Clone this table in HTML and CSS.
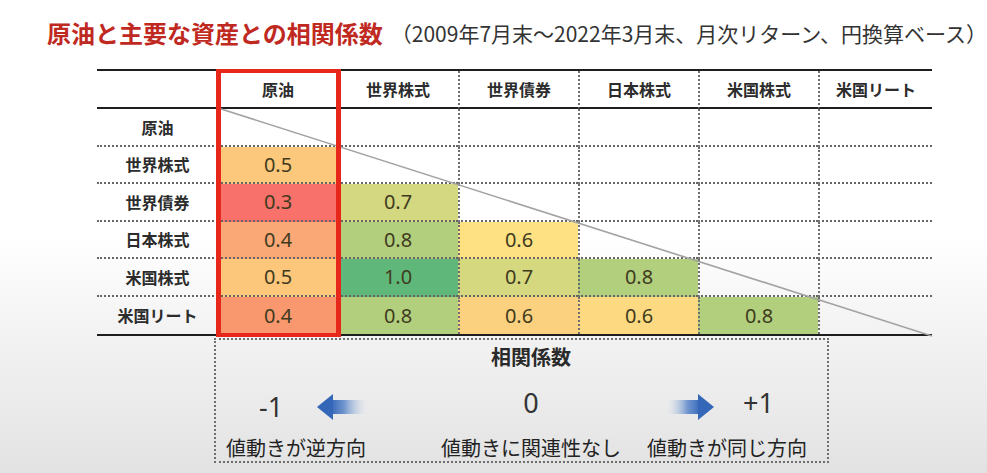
FILE: index.html
```html
<!DOCTYPE html>
<html lang="ja">
<head>
<meta charset="utf-8">
<title>原油と主要な資産との相関係数</title>
<link rel="stylesheet" href="styles.css">
</head>
<body>
<header class="title">
  <h1 class="title-main">原油と主要な資産との相関係数</h1>
  <span class="title-sub">（2009年7月末～2022年3月末、月次リターン、円換算ベース）</span>
</header>

<div class="matrix">
  <div class="cell head"></div>
  <div class="cell head">原油</div>
  <div class="cell head">世界株式</div>
  <div class="cell head vl">世界債券</div>
  <div class="cell head vl">日本株式</div>
  <div class="cell head vl">米国株式</div>
  <div class="cell head vl">米国リート</div>

  <div class="cell label">原油</div>
  <div class="cell"></div>
  <div class="cell"></div>
  <div class="cell vl"></div>
  <div class="cell vl"></div>
  <div class="cell vl"></div>
  <div class="cell vl"></div>

  <div class="cell label">世界株式</div>
  <div class="cell num c-or5">0.5</div>
  <div class="cell"></div>
  <div class="cell vl"></div>
  <div class="cell vl"></div>
  <div class="cell vl"></div>
  <div class="cell vl"></div>

  <div class="cell label">世界債券</div>
  <div class="cell num c-red3">0.3</div>
  <div class="cell num c-ol7">0.7</div>
  <div class="cell vl"></div>
  <div class="cell vl"></div>
  <div class="cell vl"></div>
  <div class="cell vl"></div>

  <div class="cell label">日本株式</div>
  <div class="cell num c-or4">0.4</div>
  <div class="cell num c-gr8">0.8</div>
  <div class="cell num vl c-ye6">0.6</div>
  <div class="cell vl"></div>
  <div class="cell vl"></div>
  <div class="cell vl"></div>

  <div class="cell label">米国株式</div>
  <div class="cell num c-or5b">0.5</div>
  <div class="cell num c-gr10">1.0</div>
  <div class="cell num vl c-ol7b">0.7</div>
  <div class="cell num vl c-gr8">0.8</div>
  <div class="cell vl"></div>
  <div class="cell vl"></div>

  <div class="cell label last">米国リート</div>
  <div class="cell num last c-or4b">0.4</div>
  <div class="cell num last c-gr8">0.8</div>
  <div class="cell num vl last c-ye6b">0.6</div>
  <div class="cell num vl last c-ye6c">0.6</div>
  <div class="cell num vl last c-gr8">0.8</div>
  <div class="cell vl last"></div>

  <svg class="diag" width="835" height="266" viewBox="0 0 835 266">
    <line x1="121" y1="37" x2="835" y2="265" stroke="#a2a2a2" stroke-width="1.6"/>
  </svg>
  <div class="highlight"></div>
</div>

<section class="legend">
  <div class="legend-title">相関係数</div>
  <div class="legend-mid left">
    <span class="num-big minus">-1</span>
    <svg class="arrow" width="50" height="26" viewBox="0 0 50 26">
      <defs>
        <linearGradient id="fadeL" x1="0" y1="0" x2="1" y2="0">
          <stop offset="0" stop-color="#3a6cbc"/>
          <stop offset="0.35" stop-color="#5b86c9" stop-opacity="0.85"/>
          <stop offset="1" stop-color="#c9d6ea" stop-opacity="0"/>
        </linearGradient>
      </defs>
      <rect x="15" y="6" width="35" height="14" fill="url(#fadeL)"/>
      <polygon points="0,13 16,0 16,26" fill="#3567b8"/>
    </svg>
  </div>
  <div class="legend-mid center">
    <span class="num-big">0</span>
  </div>
  <div class="legend-mid right">
    <svg class="arrow" width="47" height="26" viewBox="0 0 47 26">
      <defs>
        <linearGradient id="fadeR" x1="1" y1="0" x2="0" y2="0">
          <stop offset="0" stop-color="#3a6cbc"/>
          <stop offset="0.35" stop-color="#5b86c9" stop-opacity="0.85"/>
          <stop offset="1" stop-color="#c9d6ea" stop-opacity="0"/>
        </linearGradient>
      </defs>
      <rect x="0" y="6" width="32" height="14" fill="url(#fadeR)"/>
      <polygon points="47,13 31,0 31,26" fill="#3567b8"/>
    </svg>
    <span class="num-big plus">+1</span>
  </div>
  <div class="legend-text left">値動きが逆方向</div>
  <div class="legend-text center">値動きに関連性なし</div>
  <div class="legend-text right">値動きが同じ方向</div>
</section>
</body>
</html>
```

FILE: styles.css
```css
html, body {
  margin: 0;
  padding: 0;
}
body {
  width: 987px;
  height: 473px;
  overflow: hidden;
  font-family: "Noto Sans CJK JP", "Noto Sans", sans-serif;
  color: #222;
  background: linear-gradient(to bottom, #ffffff 0px, #ffffff 240px, #f4f4f4 320px, #e9e9e9 420px, #e2e2e2 473px);
}

.title {
  height: 69px;
  box-sizing: border-box;
  padding: 19px 0 0 47px;
  display: flex;
  align-items: flex-start;
  white-space: nowrap;
}
.title-main {
  margin: 0;
  font-size: 24px;
  line-height: 28px;
  height: 28px;
  font-weight: 700;
  color: #c0291f;
}
.title-sub {
  margin-left: 8px;
  font-size: 21px;
  line-height: 28px;
  color: #333;
  font-weight: 400;
}

.matrix {
  position: relative;
  margin-left: 97px;
  width: 835px;
  display: grid;
  grid-template-columns: 121px repeat(5, 120px) 114px;
  grid-template-rows: 38px repeat(6, 37.5px);
  border-top: 2px solid #1e1e1e;
  border-bottom: 2px solid #1e1e1e;
}
.cell {
  box-sizing: border-box;
  display: flex;
  align-items: center;
  justify-content: center;
  border-bottom: 2px dotted #666;
  font-size: 16px;
  font-weight: 700;
  color: #2c2c2c;
}
.cell.head {
  border-bottom: 2px solid #1e1e1e;
}
.cell.last {
  border-bottom: none;
}
.cell.vl {
  border-left: 2px dotted #6e6e6e;
}
.cell.num {
  font-family: "Noto Sans", "Noto Sans CJK JP", sans-serif;
  font-weight: 400;
  font-size: 20px;
  color: #403b1e;
}

.c-or5 { background: #fcc87b; }
.c-or5b { background: #fcc67b; }
.c-red3 { background: #f8716a; }
.c-or4 { background: #fba877; }
.c-or4b { background: #f9986f; }
.c-ol7 { background: #d4d880; }
.c-ol7b { background: #d6d880; }
.c-gr8 { background: #b2cf7e; }
.c-gr10 { background: #5fb879; }
.c-ye6 { background: #fee182; }
.c-ye6b { background: #fbd07e; }
.c-ye6c { background: #fdda81; }

.diag {
  position: absolute;
  left: 0;
  top: 0;
  pointer-events: none;
}
.highlight {
  position: absolute;
  left: 119px;
  top: -2px;
  width: 125px;
  height: 268px;
  box-sizing: border-box;
  border: 4px solid #e8271b;
  border-left-width: 5px;
  border-right-width: 5px;
  pointer-events: none;
}

.legend {
  margin: 2px 0 0 214px;
  width: 615px;
  height: 125px;
  box-sizing: border-box;
  border: 2px dotted #6e6e6e;
  display: grid;
  grid-template-columns: 215px 200px 1fr;
  grid-template-rows: 30px 66px 1fr;
}
.legend-title {
  grid-column: 2;
  grid-row: 1;
  display: flex;
  align-items: flex-end;
  justify-content: center;
  font-size: 20px;
  font-weight: 700;
  color: #2a2a2a;
  line-height: 26px;
}
.legend-mid {
  grid-row: 2;
  display: flex;
  align-items: center;
}
.legend-mid.left {
  grid-column: 1;
  padding-left: 43px;
}
.legend-mid.center {
  grid-column: 2;
  justify-content: center;
}
.legend-mid.right {
  grid-column: 3;
  padding-left: 36px;
}
.num-big {
  font-family: "Noto Sans", sans-serif;
  font-size: 27px;
  font-weight: 400;
  color: #333;
  line-height: 32px;
}
.num-big.minus {
  margin-top: 8px;
}
.num-big.plus {
  margin-left: 29px;
}
.legend-mid.left .arrow {
  margin-left: 34px;
  margin-top: 8px;
}
.legend-mid.right .arrow {
  margin-top: 8px;
}
.legend-text {
  grid-row: 3;
  font-size: 20px;
  line-height: 24px;
  color: #222;
  white-space: nowrap;
}
.legend-text.left {
  grid-column: 1;
  padding-left: 10px;
}
.legend-text.center {
  grid-column: 2;
  text-align: center;
}
.legend-text.right {
  grid-column: 3;
  padding-left: 16px;
}
```
